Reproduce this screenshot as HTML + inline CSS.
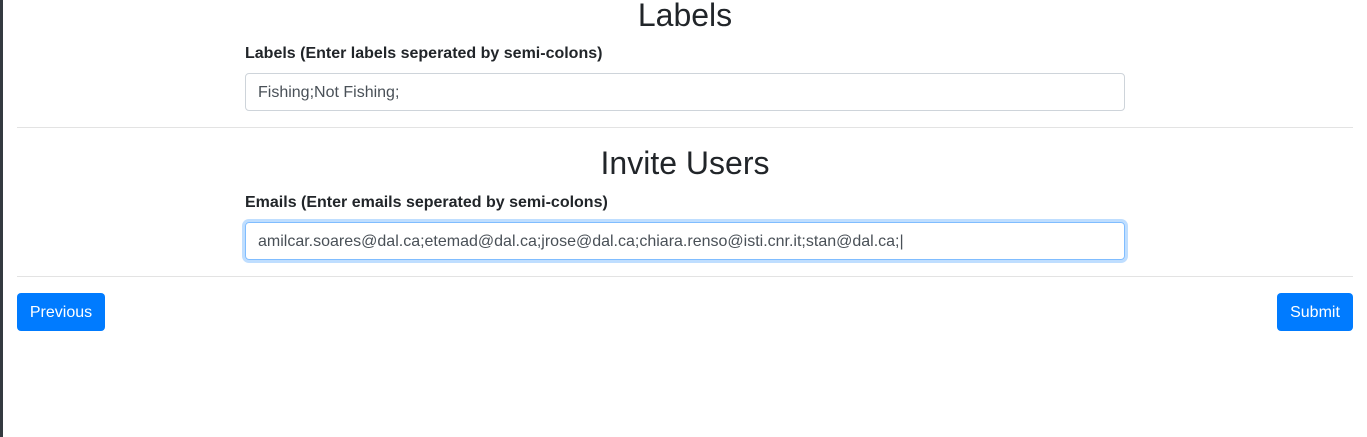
<!DOCTYPE html>
<html><head><style>
body{margin:0;width:1367px;height:437px;background:#fff;font-family:"Liberation Sans",sans-serif;color:#212529;position:relative;overflow:hidden}
.bar{position:absolute;left:0;top:0;width:3px;height:437px;background:#343a40}
.a{position:absolute}
h2{position:absolute;margin:0;font-weight:400;font-size:32px;line-height:38px;width:100%;left:0;text-align:center}
.lbl{font-weight:700;font-size:16px;left:245px}
.inp{left:245px;border:1px solid #ced4da;border-radius:4px;font-size:16px;line-height:38px;padding-left:12px;box-sizing:border-box;width:880px;height:38px;color:#495057}
.hr{left:17px;width:1336px;height:1px;background:#e3e3e3}
.btn{background:#007bff;color:#fff;font-size:16px;border-radius:4px;height:38px;line-height:40px;text-align:center}
</style></head><body>
<div class="bar"></div>
<h2 style="top:-4px;left:0;width:1370px">Labels</h2>
<div class="a lbl" style="top:45px">Labels (Enter labels seperated by semi-colons)</div>
<div class="a inp" style="top:73px">Fishing;Not Fishing;</div>
<div class="a hr" style="top:127px"></div>
<h2 style="top:144px;left:0;width:1370px">Invite Users</h2>
<div class="a lbl" style="top:194px">Emails (Enter emails seperated by semi-colons)</div>
<div class="a inp" style="top:222px;border-color:#80bdff;box-shadow:0 0 0 3px rgba(0,123,255,.25)">amilcar.soares@dal.ca;etemad@dal.ca;jrose@dal.ca;chiara.renso@isti.cnr.it;stan@dal.ca;|</div>
<div class="a hr" style="top:276px"></div>
<div class="a btn" style="left:17px;top:293px;width:88px">Previous</div>
<div class="a btn" style="left:1277px;top:293px;width:76px">Submit</div>
</body></html>
